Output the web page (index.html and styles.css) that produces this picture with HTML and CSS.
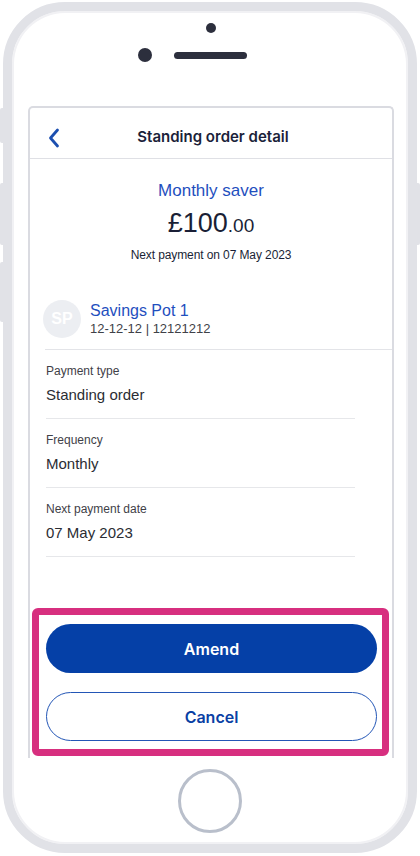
FILE: index.html
```html
<!DOCTYPE html>
<html lang="en">
<head>
<meta charset="utf-8">
<title>Standing order detail</title>
<link rel="stylesheet" href="styles.css">
</head>
<body>
<div class="side-btn left b1"></div>
<div class="side-btn left b2"></div>
<div class="side-btn left b3"></div>
<div class="side-btn right b4"></div>
<div class="phone">
  <div class="phone-top">
    <div class="cam-dot"></div>
    <div class="top-row">
      <div class="front-cam"></div>
      <div class="speaker"></div>
    </div>
  </div>
  <div class="screen">
    <header class="app-header">
      <span class="back">
        <svg width="12" height="20" viewBox="0 0 12 20"><path d="M9.5 2 L2.5 10 L9.5 18" fill="none" stroke="#1c4fb0" stroke-width="2.8" stroke-linecap="round" stroke-linejoin="round"/></svg>
      </span>
      <h1 class="title">Standing order detail</h1>
    </header>
    <section class="summary">
      <div class="name">Monthly saver</div>
      <div class="amount">£100<span class="pence">.00</span></div>
      <div class="next">Next payment on 07 May 2023</div>
    </section>
    <section class="pot">
      <div class="avatar">SP</div>
      <div class="pot-info">
        <div class="pot-name">Savings Pot 1</div>
        <div class="pot-acc">12-12-12 | 12121212</div>
      </div>
    </section>
    <ul class="details">
      <li class="row"><div class="label">Payment type</div><div class="value">Standing order</div></li>
      <li class="row"><div class="label">Frequency</div><div class="value">Monthly</div></li>
      <li class="row"><div class="label">Next payment date</div><div class="value">07 May 2023</div></li>
    </ul>
    <div class="actions">
      <button class="btn primary">Amend</button>
      <button class="btn secondary">Cancel</button>
    </div>
  </div>
  <div class="home-area">
    <div class="home-btn"></div>
  </div>
</div>
</body>
</html>
```
FILE: styles.css
```css
* { box-sizing: border-box; }
html, body { margin: 0; padding: 0; }
body {
  width: 420px;
  height: 856px;
  background: #ffffff;
  position: relative;
  overflow: hidden;
  font-family: "Liberation Sans", Arial, sans-serif;
  color: #1a1f36;
}
.side-btn {
  position: absolute;
  width: 5px;
  background: #e1e2e7;
  border-radius: 2px;
}
.side-btn.left { left: 0; }
.side-btn.right { right: 0; }
.b1 { top: 108px; height: 35px; }
.b2 { top: 183px; height: 62px; }
.b3 { top: 262px; height: 60px; }
.b4 { top: 183px; height: 62px; }

.phone {
  margin: 2px 3px 0 3px;
  width: 414px;
  height: 851px;
  border: 9px solid #e1e2e7;
  border-radius: 62px;
  background: #fff;
  box-shadow: inset 0 0 0 2px #f1f1f4;
  display: flex;
  flex-direction: column;
  position: relative;
  z-index: 1;
}
.phone-top {
  height: 95px;
  display: flex;
  flex-direction: column;
  align-items: center;
  padding-top: 12px;
}
.cam-dot {
  width: 10px;
  height: 10px;
  border-radius: 50%;
  background: #2c2f3d;
  margin-left: 2px;
}
.top-row {
  display: flex;
  align-items: center;
  margin-top: 15px;
  margin-left: -35px;
}
.front-cam {
  width: 14px;
  height: 14px;
  border-radius: 50%;
  background: #2c2f3d;
}
.speaker {
  width: 73px;
  height: 7px;
  border-radius: 4px;
  background: #2c2f3d;
  margin-left: 22px;
}

.screen {
  margin-left: 16px;
  width: 366px;
  height: 652px;
  border: 2px solid #dadbe1;
  border-bottom: none;
  border-radius: 5px 5px 0 0;
  display: flex;
  flex-direction: column;
}
.app-header {
  height: 51px;
  border-bottom: 1px solid #dfe0e5;
  display: flex;
  align-items: center;
  position: relative;
  padding-top: 6px;
}
.back {
  position: absolute;
  left: 18px;
  top: 20px;
  display: flex;
}
.title {
  margin: 0;
  width: 100%;
  text-align: center;
  font-family: Inter, "Noto Sans", sans-serif;
  font-weight: 600;
  font-size: 15px;
  color: #1b1f3a;
  padding-left: 4px;
}
.summary {
  display: flex;
  flex-direction: column;
  align-items: center;
  padding-top: 21px;
}
.name {
  font-size: 17px;
  color: #1f4fbe;
  line-height: 22px;
}
.amount {
  font-size: 27px;
  line-height: 32px;
  margin-top: 5px;
  color: #1a1f36;
}
.pence { font-size: 19px; }
.next {
  font-size: 12px;
  line-height: 16px;
  margin-top: 5px;
  color: #1a1f36;
  letter-spacing: -0.1px;
}
.pot {
  margin-left: 15px;
  margin-top: 37px;
  height: 50px;
  border-bottom: 1px solid #e3e4e8;
  display: flex;
  align-items: flex-start;
}
.avatar {
  width: 38px;
  height: 38px;
  border-radius: 50%;
  background: #eceef2;
  color: #fff;
  font-weight: 700;
  font-size: 16px;
  display: flex;
  align-items: center;
  justify-content: center;
  margin-left: -2px;
  flex: none;
}
.pot-info { margin-left: 9px; margin-top: 1px; }
.pot-name {
  font-size: 16px;
  line-height: 20px;
  color: #1f4fbe;
}
.pot-acc {
  font-size: 13px;
  line-height: 16px;
  color: #3f4148;
}
.details {
  list-style: none;
  margin: 0;
  padding: 0 0 0 16px;
}
.row {
  width: 309px;
  height: 69px;
  border-bottom: 1px solid #e6e7ea;
  padding-top: 13px;
}
.label {
  font-size: 12px;
  line-height: 16px;
  color: #3f4148;
}
.value {
  font-size: 15px;
  line-height: 20px;
  margin-top: 6px;
  color: #2b2d33;
}
.actions {
  margin: auto 3px 0 2px;
  border: 7px solid #d72f7f;
  border-radius: 6px;
  padding: 9px 5px 8px 7px;
  display: flex;
  flex-direction: column;
  gap: 19px;
  margin-bottom: 2px;
}
.btn {
  height: 49px;
  border-radius: 25px;
  font-family: Inter, "Noto Sans", sans-serif;
  font-weight: 600;
  font-size: 16px;
  width: 100%;
  cursor: pointer;
}
.btn.primary {
  background: #0540a7;
  color: #fff;
  border: none;
}
.btn.secondary {
  background: #fff;
  color: #0a3fa4;
  border: 1px solid #2356b6;
}
.home-area {
  flex: 1;
  display: flex;
  justify-content: center;
  padding-top: 11px;
}
.home-btn {
  width: 64px;
  height: 64px;
  border-radius: 50%;
  border: 3px solid #b9bfcb;
}
```
